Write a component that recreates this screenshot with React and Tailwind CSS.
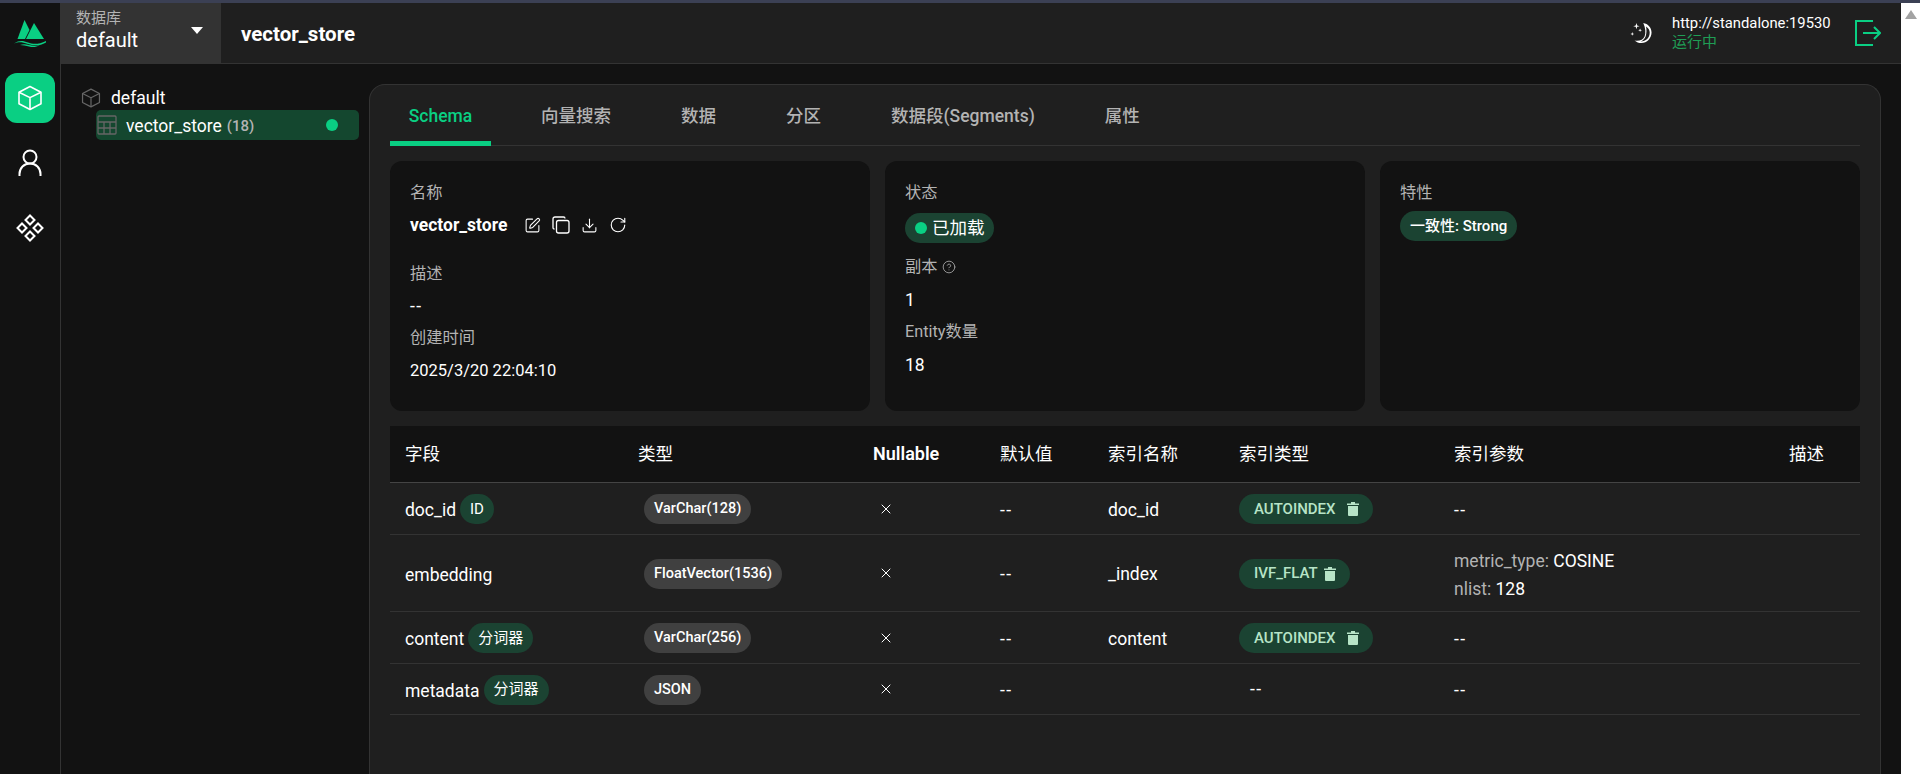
import { SquarePen, Download, RotateCw, CircleHelp, X } from 'lucide-react';

const FONT = "font-['Roboto','Noto_Sans_CJK_SC',sans-serif]";

const CubeIcon = ({ className }) => (
  <svg viewBox="0 0 26 26" fill="none" stroke="currentColor" strokeWidth="1.6" strokeLinejoin="round" className={className}>
    <path d="M13 1.500 24 7.200v11.600L13 24.500 2 18.800V7.200z" />
    <path d="M2 7.200 13 12.600 24 7.200M13 12.600v11.900" />
  </svg>
);

const Logo = () => (
  <svg viewBox="0 0 32 28" className="w-8 h-7">
    <path d="M3.500 20 10.500 1l5 10-4.500 9z" fill="#0acf83" />
    <path d="M12 20 20 4l10 16z" fill="#0acf83" />
    <path d="M0 24.500c5-3.500 9-3 14-1s11 2 18-1.500v1.500c-6 3.500-12 3.500-18 1.500s-9-2.500-14-.500z" fill="#0acf83" />
    <path d="M6 26c3-1.200 6-1 9 0s7 1.200 11 0c-4 2.500-8 2.500-11 1.500s-6-1.500-9-1.500z" fill="#0acf83" />
  </svg>
);

const UserIcon = () => (
  <svg viewBox="0 0 24 28" fill="none" stroke="#fff" strokeWidth="2" className="w-6 h-7">
    <circle cx="12" cy="8" r="6.500" />
    <path d="M1.500 27v-2c0-6 4.500-10.500 10.500-10.500S22.500 19 22.500 25v2" />
  </svg>
);

const DiamondsIcon = () => (
  <svg viewBox="0 0 28 28" fill="none" stroke="#fff" strokeWidth="2" className="w-7 h-7">
    <path d="M14 1.500 18.500 6 14 10.500 9.500 6z" />
    <path d="M22 9.500 26.500 14 22 18.500 17.500 14z" />
    <path d="M6 9.500 10.500 14 6 18.500 1.500 14z" />
    <path d="M14 17.500 18.500 22 14 26.500 9.500 22z" />
  </svg>
);

const MoonIcon = () => (
  <svg viewBox="0 0 24 24" className="w-[22px] h-[22px]" fill="#fff">
    <path d="M14.500 1c5 .8 9 5 9 10.500C23.500 17.800 18.500 23 12.500 23c-3 0-5.500-1-7.500-2.800 5 .8 9.500-.6 11-4.700 1.300-3.500 1-9-1.500-14.500zm3 4c.8 3.500.6 7.500-.4 10.500-1 2.800-3 4.700-5.600 5.800 5.500.2 10-3.800 10-9.800 0-2.600-1.700-5-4-6.500z" />
    <path d="M7 1l.8 2.700L10.500 4.500l-2.700.8L7 8l-.8-2.700L3.500 4.500l2.700-.8zM11 7l.5 1.500L13 9l-1.500.5L11 11l-.5-1.500L9 9l1.500-.5zM2.500 11l.5 1.500 1.500.5-1.500.5-.5 1.500-.5-1.500L.5 13l1.500-.5z" />
  </svg>
);

const ExitIcon = () => (
  <svg viewBox="0 0 26 26" fill="none" stroke="#0acf83" strokeWidth="2" className="w-[26px] h-[26px]">
    <path d="M18 1H1v24h17" />
    <path d="M8 13h17M19 7l6 6-6 6" />
  </svg>
);

const TableIcon = () => (
  <svg viewBox="0 0 20 20" fill="none" stroke="#666" strokeWidth="1.300" className="w-5 h-5 shrink-0">
    <rect x="1" y="1" width="18" height="18" rx="1" />
    <path d="M1 7h18M1 13h18M7 7v12M13 7v12" />
  </svg>
);

const CopyIcon = () => (
  <svg viewBox="0 0 18 18" fill="none" stroke="#fff" strokeWidth="1.300" className="w-[18px] h-[18px]">
    <rect x="4.500" y="4.500" width="12.500" height="12.500" rx="2" />
    <path d="M2.500 13C1.500 13 1 12.500 1 11.500V3c0-1.200.8-2 2-2h8.500c1 0 1.500.5 1.500 1.500" />
  </svg>
);

const Chip = ({ children, className = '' }) => (
  <span className={`inline-flex items-center align-middle h-[30px] px-[10px] rounded-[15px] whitespace-nowrap ${className}`}>
    {children}
  </span>
);

const IndexChip = ({ name, width }) => (
  <Chip className={`bg-[#1b4332] text-[15px] font-medium text-[#b7e4c7] pl-[15px] pr-[14px] justify-between ${width}`}>
    {name}
    <svg viewBox="0 0 12 14" className="w-3 h-[14px]" fill="#b7e4c7">
      <path d="M4 0h4v1.500h4V3H0V1.500h4zM1 4h10v9a1 1 0 0 1-1 1H2a1 1 0 0 1-1-1z" />
    </svg>
  </Chip>
);

const FieldChip = ({ children }) => <Chip className="bg-[#1b4332] text-[15px] text-white ml-[4px]">{children}</Chip>;
const TypeChip = ({ children }) => <Chip className="bg-[#404040] text-[14.5px] font-medium text-white ml-[6px]">{children}</Chip>;

const Dash = () => <span className="tracking-[1.5px]">--</span>;

const tabs = ['向量搜索', '数据', '分区', '数据段(Segments)', '属性'];

const rows = [
  { name: 'doc_id', tag: 'ID', type: 'VarChar(128)', indexName: 'doc_id', index: 'AUTOINDEX', chipWidth: 'w-[134px]', height: 'h-[52px]' },
  { name: 'embedding', type: 'FloatVector(1536)', indexName: '_index', index: 'IVF_FLAT', chipWidth: 'w-[111px]', height: 'h-[77px]', params: true },
  { name: 'content', tag: '分词器', type: 'VarChar(256)', indexName: 'content', index: 'AUTOINDEX', chipWidth: 'w-[134px]', height: 'h-[52px]' },
  { name: 'metadata', tag: '分词器', type: 'JSON', indexName: '', height: 'h-[51px]' },
];

const Label = ({ children, className = '' }) => (
  <div className={`text-[16.25px] leading-[24px] text-[#b3b3b3] ${className}`}>{children}</div>
);

const Value = ({ children, className = '' }) => (
  <div className={`leading-[24px] text-white ${className}`}>{children}</div>
);

const Th = ({ children, className = '' }) => (
  <th className={`px-[15px] text-left font-normal text-white ${className}`}>{children}</th>
);

export default function App() {
  return (
    <div className={`h-[774px] flex flex-col overflow-hidden ${FONT}`}>
      <div className="h-[3px] bg-[#3b4054] shrink-0" />
      <div className="flex-1 flex min-h-0">
        <div className="flex-1 flex min-w-0 bg-[#121212]">
          {/* sidebar */}
          <aside className="w-[61px] shrink-0 border-r border-[#333] flex flex-col items-center">
            <div className="h-[60px] flex items-center justify-center">
              <Logo />
            </div>
            <div className="mt-[10px] w-[50px] h-[50px] rounded-xl bg-[#0acf83] flex items-center justify-center text-white">
              <CubeIcon className="w-[26px] h-[26px]" />
            </div>
            <div className="mt-[26px]">
              <UserIcon />
            </div>
            <div className="mt-[37px]">
              <DiamondsIcon />
            </div>
          </aside>

          <div className="flex-1 flex flex-col min-w-0">
            <header className="h-[61px] shrink-0 flex items-center bg-[#1f1f1f] border-b border-[#333]">
              <div className="w-[160px] h-full bg-[#333] pl-[15px] pr-[18px] flex items-center justify-between">
                <div className="mt-[-7px]">
                  <div className="text-[15px] leading-[20px] text-[#b3b3b3]">数据库</div>
                  <div className="text-[20px] leading-[24px] text-white">default</div>
                </div>
                <div className="w-0 h-0 border-x-[6.5px] border-x-transparent border-t-[7px] border-t-white mb-[5px]" />
              </div>
              <div className="ml-5 mt-[2px] text-[20.5px] font-bold text-white">vector_store</div>
              <div className="ml-auto flex items-center pr-[20px]">
                <MoonIcon />
                <div className="ml-[20px] w-[183px]">
                  <div className="text-[14.8px] leading-[19px] text-white">http://standalone:19530</div>
                  <div className="text-[15px] leading-[19px] text-[#1f9d55]">运行中</div>
                </div>
                <ExitIcon />
              </div>
            </header>

            <div className="flex-1 flex min-h-0">
              {/* tree */}
              <nav className="w-[308px] shrink-0 pt-[22px] pl-5">
                <div className="flex items-center h-6 text-[17.5px] text-white">
                  <CubeIcon className="w-5 h-5 text-[#666] shrink-0" />
                  <span className="ml-[10px]">default</span>
                </div>
                <div className="ml-[15px] w-[263px] h-[30px] rounded-[5px] bg-[#14472f] flex items-center pl-px pr-[21px]">
                  <TableIcon />
                  <span className="ml-[9px] pt-[2px] text-[17.5px] text-white">vector_store</span>
                  <span className="ml-[5px] pt-[2px] text-[15px] font-medium text-[#b3b3b3]">(18)</span>
                  <span className="ml-auto w-3 h-3 rounded-full bg-[#0acf83]" />
                </div>
              </nav>

              {/* main panel */}
              <main className="flex-1 mt-5 mr-5 min-w-0 bg-[#1f1f1f] border border-b-0 border-[#333] rounded-t-2xl px-5">
                <div className="flex gap-[30px] h-[61px] border-b border-[#333]">
                  <div className="w-[101px] pt-[6px] h-[61px] border-b-[5px] border-[#0acf83] text-[17.5px] font-medium text-[#0acf83] flex items-center justify-center">
                    Schema
                  </div>
                  {tabs.map((tab) => (
                    <div key={tab} className="px-5 pt-[6px] h-[56px] text-[17.5px] font-medium text-[#b3b3b3] flex items-center">
                      {tab}
                    </div>
                  ))}
                </div>

                <div className="mt-[15px] grid grid-cols-3 gap-[15px]">
                  <section className="h-[250px] rounded-xl bg-[#121212] p-5">
                    <Label>名称</Label>
                    <div className="mt-[8px] flex items-center h-6 text-white">
                      <span className="text-[17.5px] font-bold">vector_store</span>
                      <span className="ml-[17px] flex items-center gap-[11px]">
                        <SquarePen className="w-[17px] h-[17px]" strokeWidth={1.5} />
                        <CopyIcon />
                        <Download className="w-[17px] h-[17px]" strokeWidth={1.5} />
                        <RotateCw className="w-[18px] h-[18px]" strokeWidth={1.5} />
                      </span>
                    </div>
                    <Label className="mt-[25px]">描述</Label>
                    <Value className="mt-[8px] text-[17.5px]"><Dash /></Value>
                    <Label className="mt-[8px]">创建时间</Label>
                    <Value className="mt-[9px] text-[16.5px]">2025/3/20 22:04:10</Value>
                  </section>

                  <section className="h-[250px] rounded-xl bg-[#121212] p-5">
                    <Label>状态</Label>
                    <div className="mt-[8px] inline-flex items-center h-[30px] rounded-[15px] bg-[#1b4332] pl-[10px] pr-[9px]">
                      <span className="w-3 h-3 rounded-full bg-[#0acf83]" />
                      <span className="ml-[5px] text-[17.5px] text-white">已加载</span>
                    </div>
                    <Label className="mt-[12px] flex items-center">
                      副本
                      <CircleHelp className="ml-[4px] w-[14px] h-[14px] text-[#a5a5a5]" strokeWidth={1.5} />
                    </Label>
                    <Value className="mt-[9px] text-[17.5px]">1</Value>
                    <Label className="mt-[8px]">Entity数量</Label>
                    <Value className="mt-[9px] text-[17.5px]">18</Value>
                  </section>

                  <section className="h-[250px] rounded-xl bg-[#121212] p-5">
                    <Label>特性</Label>
                    <div className="mt-[6px]">
                      <Chip className="bg-[#1b4332] text-[15px] font-medium text-white">一致性: Strong</Chip>
                    </div>
                  </section>
                </div>

                <table className="mt-[15px] w-full table-fixed border-collapse">
                  <colgroup>
                    <col className="w-[233px]" />
                    <col className="w-[235px]" />
                    <col className="w-[127px]" />
                    <col className="w-[108px]" />
                    <col className="w-[131px]" />
                    <col className="w-[215px]" />
                    <col className="w-[335px]" />
                    <col className="w-[86px]" />
                  </colgroup>
                  <thead>
                    <tr className="h-[56px] bg-[#121212] border-b border-[#444] text-[17.5px]">
                      <Th>字段</Th>
                      <Th>类型</Th>
                      <Th className="text-[18px] font-semibold">Nullable</Th>
                      <Th>默认值</Th>
                      <Th>索引名称</Th>
                      <Th>索引类型</Th>
                      <Th>索引参数</Th>
                      <Th>描述</Th>
                    </tr>
                  </thead>
                  <tbody className="text-[17.5px] text-white">
                    {rows.map((row) => (
                      <tr key={row.name} className={`${row.height} border-b border-[#333]`}>
                        <td className="px-[15px] pt-[2px] whitespace-nowrap">
                          <div className="flex items-center">
                            <span className="pt-[3px]">{row.name}</span>
                            {row.tag && <FieldChip>{row.tag}</FieldChip>}
                          </div>
                        </td>
                        <td className="px-[15px] pt-[2px]">
                          <TypeChip>{row.type}</TypeChip>
                        </td>
                        <td className="px-[15px] pt-[1px]">
                          <X className="ml-[5px] w-[16px] h-[16px]" strokeWidth={1.5} />
                        </td>
                        <td className="px-[15px] pt-[4px]"><Dash /></td>
                        <td className="px-[15px] pt-[4px]">{row.indexName}</td>
                        <td className="px-[15px] pt-[2px]">
                          {row.index ? <IndexChip name={row.index} width={row.chipWidth} /> : <span className="ml-[11px]"><Dash /></span>}
                        </td>
                        <td className="px-[15px] pt-[4px]">
                          {row.params ? (
                            <div className="leading-[28px]">
                              <div><span className="text-[#b3b3b3]">metric_type:</span> COSINE</div>
                              <div><span className="text-[#b3b3b3]">nlist:</span> 128</div>
                            </div>
                          ) : (
                            <Dash />
                          )}
                        </td>
                        <td className="px-[15px]" />
                      </tr>
                    ))}
                  </tbody>
                </table>
              </main>
            </div>
          </div>
        </div>

        {/* browser scrollbar */}
        <div className="w-[19px] shrink-0 bg-white flex justify-center pt-[7px]">
          <div className="w-0 h-0 border-x-[6.5px] border-x-transparent border-b-[9px] border-b-[#a3a3a3]" />
        </div>
      </div>
    </div>
  );
}
